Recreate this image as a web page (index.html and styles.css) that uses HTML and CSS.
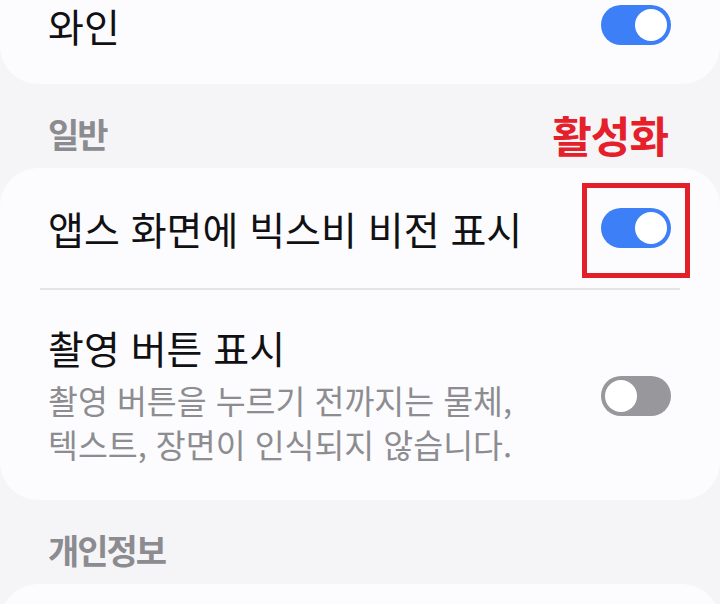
FILE: index.html
```html
<!DOCTYPE html>
<html lang="ko">
<head>
<meta charset="utf-8">
<link rel="stylesheet" href="styles.css">
</head>
<body>
<div class="screen">
  <section class="card card-first">
    <div class="row row-single row-top">
      <span class="title">와인</span>
      <span class="switch on"><span class="knob"></span></span>
    </div>
  </section>

  <div class="section-header">
    <span class="header-label">일반</span>
    <span class="badge-red">활성화</span>
  </div>

  <section class="card">
    <div class="row row-single">
      <span class="title">앱스 화면에 빅스비 비전 표시</span>
      <span class="switch-wrap">
        <span class="switch on"><span class="knob"></span></span>
        <span class="highlight"></span>
      </span>
    </div>
    <div class="divider"></div>
    <div class="row row-multi">
      <div class="text-block">
        <div class="title">촬영 버튼 표시</div>
        <div class="subtitle">촬영 버튼을 누르기 전까지는 물체,<br>텍스트, 장면이 인식되지 않습니다.</div>
      </div>
      <span class="switch off"><span class="knob"></span></span>
    </div>
  </section>

  <div class="section-header">
    <span class="header-label">개인정보</span>
  </div>

  <section class="card card-last"></section>
</div>
</body>
</html>
```

FILE: styles.css
```css
html, body {
  margin: 0;
  padding: 0;
}

body {
  background: #f5f5f7;
  font-family: "Noto Sans CJK KR", "Noto Sans", sans-serif;
  width: 720px;
  height: 604px;
  overflow: hidden;
}

.screen {
  display: flex;
  flex-direction: column;
}

.card {
  background: #fcfcfe;
  border-radius: 38px;
  display: flex;
  flex-direction: column;
}

.card-first {
  border-radius: 0 0 38px 38px;
}

.card-last {
  height: 120px;
}

.row {
  display: flex;
  align-items: center;
  justify-content: space-between;
  padding: 0 48px 0 48px;
}

.row-top {
  padding-top: 5px;
  padding-bottom: 39px;
}

.row-single {
  height: 120px;
  box-sizing: border-box;
}

.row-top.row-single {
  height: 84px;
}

.row-multi {
  padding-top: 35px;
  padding-bottom: 34px;
}

.title {
  font-size: 39px;
  line-height: 44px;
  color: #111113;
  font-weight: 400;
  white-space: nowrap;
}

.row-single .title {
  line-height: 40px;
}

.subtitle {
  margin-top: 9px;
  font-size: 32.5px;
  line-height: 44px;
  color: #8d8d91;
  white-space: nowrap;
}

.divider {
  height: 2px;
  background: #e4e4e6;
  margin: 0 40px;
}

.section-header {
  display: flex;
  align-items: center;
  justify-content: space-between;
  padding: 30px 52px 14px 48px;
  height: 40px;
}

.header-label {
  font-size: 34px;
  line-height: 40px;
  font-weight: 700;
  color: #8b8b90;
  letter-spacing: -2px;
}

.badge-red {
  font-size: 43px;
  line-height: 40px;
  font-weight: 700;
  color: #e5202b;
  letter-spacing: -1px;
}

.switch {
  position: relative;
  display: block;
  width: 70px;
  height: 40px;
  border-radius: 20px;
  flex: none;
  margin-right: 1px;
}

.switch.on {
  background: #3d7ff6;
}

.switch.off {
  background: #98989c;
}

.knob {
  position: absolute;
  top: 4px;
  width: 32px;
  height: 32px;
  border-radius: 50%;
  background: #ffffff;
}

.switch.on .knob {
  right: 4px;
}

.switch.off .knob {
  left: 4px;
}

.switch-wrap {
  position: relative;
  display: block;
  flex: none;
}

.highlight {
  position: absolute;
  left: -19px;
  right: -18px;
  top: -25px;
  bottom: -30px;
  border: 5px solid #e31f2a;
}
```
